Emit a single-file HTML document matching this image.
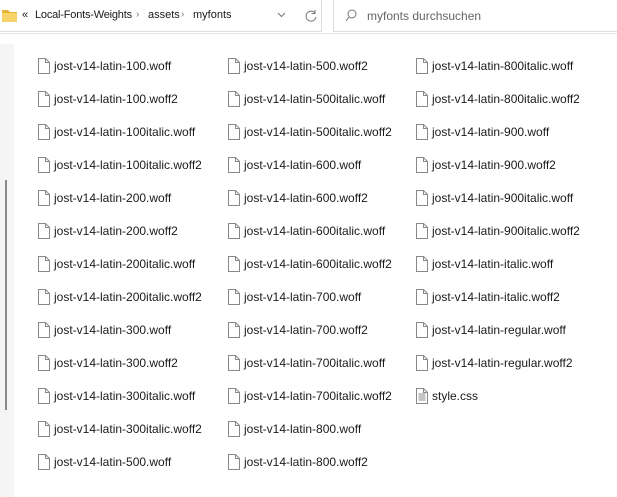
<!DOCTYPE html>
<html><head><meta charset="utf-8"><style>
*{margin:0;padding:0;box-sizing:border-box}
body{width:617px;height:497px;background:#fff;position:relative;overflow:hidden;font-family:"Liberation Sans",sans-serif;font-size:12px;color:#1a1a1a}
.box{position:absolute;top:-1px;height:33px;border:1px solid #dedede;background:#fff}
.t{position:absolute;white-space:nowrap}
.item{position:absolute;height:18px;white-space:nowrap}
.item svg{position:absolute;left:0;top:1px}
.item span{position:absolute;left:16px;top:2px}
</style></head><body>
<div class="box" style="left:-2px;width:324px"></div>
<div class="box" style="left:333px;width:290px"></div>
<div style="position:absolute;left:0;top:33px;width:617px;height:1px;background:#e5e5e5"></div>
<svg style="position:absolute;left:2px;top:9px" width="15" height="13"><path d="M0 1h6l2 2h7v10H0z" fill="#e8b436"/><path d="M0 4h15v9H0z" fill="#f8d36a"/></svg>
<div class="t" style="left:22px;top:9px;font-size:11px">«</div>
<div class="t" style="left:35px;top:9px;font-size:11px;letter-spacing:-0.2px">Local-Fonts-Weights</div>
<div class="t" style="left:136px;top:9px;font-size:10px;color:#777">›</div>
<div class="t" style="left:148px;top:9px;font-size:11px">assets</div>
<div class="t" style="left:181px;top:9px;font-size:10px;color:#777">›</div>
<div class="t" style="left:193px;top:9px;font-size:11px">myfonts</div>
<svg style="position:absolute;left:277px;top:12px" width="9" height="6"><path d="M1 1l3.5 3.5L8 1" stroke="#777" fill="none"/></svg>
<svg style="position:absolute;left:304px;top:9px" width="14" height="14"><path d="M11 4A5 5 0 1 0 12 8" stroke="#777" fill="none"/><path d="M11 1v3.5H7.5" stroke="#777" fill="none"/></svg>
<svg style="position:absolute;left:345px;top:9px" width="12" height="14"><circle cx="7" cy="5" r="4" stroke="#777" fill="none"/><path d="M4 8L1 12" stroke="#777"/></svg>
<div class="t" style="left:367px;top:9px;color:#666">myfonts durchsuchen</div>
<div style="position:absolute;left:0;top:44px;width:14px;height:453px;background:#f5f5f5"></div>
<div style="position:absolute;left:5px;top:180px;width:2px;height:230px;background:#8a8a8a"></div>
<div id="list"></div>
<script>
var cols=[[38,["100.woff","100.woff2","100italic.woff","100italic.woff2","200.woff","200.woff2","200italic.woff","200italic.woff2","300.woff","300.woff2","300italic.woff","300italic.woff2","500.woff"]],
[228,["500.woff2","500italic.woff","500italic.woff2","600.woff","600.woff2","600italic.woff","600italic.woff2","700.woff","700.woff2","700italic.woff","700italic.woff2","800.woff","800.woff2"]],
[416,["800italic.woff","800italic.woff2","900.woff","900.woff2","900italic.woff","900italic.woff2","italic.woff","italic.woff2","regular.woff","regular.woff2","*style.css"]]];
var h="";
cols.forEach(function(c){c[1].forEach(function(n,i){var y=57+i*33;var css=n[0]=="*";var name=css?n.slice(1):"jost-v14-latin-"+n;
var ic='<svg width="12" height="16"><path d="M0.5 0.5h7l4 4v11h-11z" fill="#fff" stroke="#888"/><path d="M7.5 0.5v4h4" fill="none" stroke="#888"/>'+(css?'<path d="M2.5 6h7M2.5 8h7M2.5 10h7M2.5 12h7" stroke="#888"/>':'')+'</svg>';
h+='<div class="item" style="left:'+c[0]+'px;top:'+y+'px">'+ic+'<span>'+name+'</span></div>';});});
document.getElementById("list").innerHTML=h;
</script>
</body></html>
